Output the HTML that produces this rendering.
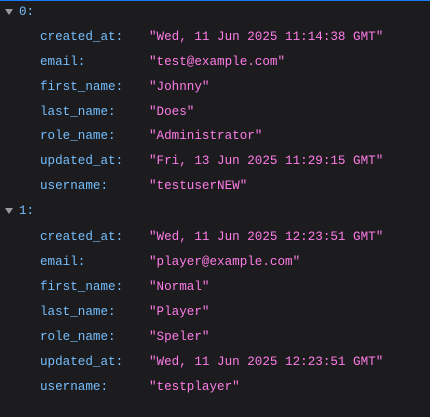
<!DOCTYPE html>
<html><head><style>
html,body{margin:0;padding:0;}
body{width:430px;height:417px;background:#1c1b1d;overflow:hidden;position:relative;font-family:"Liberation Mono",monospace;font-size:12.6px;}
.top{position:absolute;left:0;top:0;width:430px;height:1px;background:#1a7cf5;}
.r{position:absolute;left:0;height:20px;line-height:20px;white-space:pre;}
.k{color:#75bfff;position:absolute;left:40px;}
.v{color:#ff7de9;position:absolute;left:149px;}
.h{color:#75bfff;position:absolute;left:19px;}
.tri{position:absolute;left:5px;top:7px;width:0;height:0;border-left:4px solid transparent;border-right:4px solid transparent;border-top:6px solid #9a9a9e;}
</style></head><body>
<div class="top"></div>
<div class="r" style="top:2px"><span class="tri"></span><span class="h">0:</span></div>
<div class="r" style="top:27px"><span class="k">created_at:</span><span class="v">"Wed, 11 Jun 2025 11:14:38 GMT"</span></div>
<div class="r" style="top:52px"><span class="k">email:</span><span class="v">"test@example.com"</span></div>
<div class="r" style="top:77px"><span class="k">first_name:</span><span class="v">"Johnny"</span></div>
<div class="r" style="top:102px"><span class="k">last_name:</span><span class="v">"Does"</span></div>
<div class="r" style="top:126px"><span class="k">role_name:</span><span class="v">"Administrator"</span></div>
<div class="r" style="top:151px"><span class="k">updated_at:</span><span class="v">"Fri, 13 Jun 2025 11:29:15 GMT"</span></div>
<div class="r" style="top:176px"><span class="k">username:</span><span class="v">"testuserNEW"</span></div>
<div class="r" style="top:201px"><span class="tri"></span><span class="h">1:</span></div>
<div class="r" style="top:227px"><span class="k">created_at:</span><span class="v">"Wed, 11 Jun 2025 12:23:51 GMT"</span></div>
<div class="r" style="top:252px"><span class="k">email:</span><span class="v">"player@example.com"</span></div>
<div class="r" style="top:277px"><span class="k">first_name:</span><span class="v">"Normal"</span></div>
<div class="r" style="top:302px"><span class="k">last_name:</span><span class="v">"Player"</span></div>
<div class="r" style="top:327px"><span class="k">role_name:</span><span class="v">"Speler"</span></div>
<div class="r" style="top:352px"><span class="k">updated_at:</span><span class="v">"Wed, 11 Jun 2025 12:23:51 GMT"</span></div>
<div class="r" style="top:377px"><span class="k">username:</span><span class="v">"testplayer"</span></div>
</body></html>
